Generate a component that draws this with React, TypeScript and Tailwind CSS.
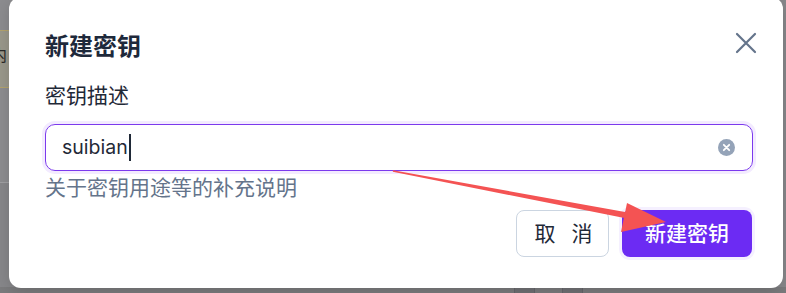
import React from "react";

const cjk = { fontFamily: "Inter, 'Noto Sans CJK SC', sans-serif" };

function CloseIcon() {
  return (
    <svg width="22" height="22" viewBox="0 0 22 22" fill="none">
      <path d="M2 2 L20 20 M20 2 L2 20" stroke="#64748b" strokeWidth="2.2" strokeLinecap="round" />
    </svg>
  );
}

function ClearIcon() {
  return (
    <svg width="17" height="17" viewBox="0 0 17 17">
      <circle cx="8.5" cy="8.5" r="8.5" fill="#94a3b8" />
      <path d="M5.8 5.8 L11.2 11.2 M11.2 5.8 L5.8 11.2" stroke="#fff" strokeWidth="1.8" strokeLinecap="round" />
    </svg>
  );
}

// red annotation arrow drawn over the screenshot
function Arrow() {
  return (
    <svg className="absolute left-0 top-0 pointer-events-none" width="786" height="293" viewBox="0 0 786 293">
      <polygon points="393,170.2 392.8,171.8 629.4,219 630.6,213" fill="#f45353" />
      <polygon points="627,203 666,222 621,232" fill="#f45353" />
    </svg>
  );
}

export default function App() {
  return (
    <div className="relative w-[786px] h-[293px] overflow-hidden bg-[#88888b]" style={cjk}>
      {/* backdrop remnants */}
      <div className="absolute left-0 top-0 w-[12px] h-full flex flex-col">
        <div className="h-[30px] bg-[#8c8c8f]" />
        <div className="h-[58px] bg-[#9a988b] border-y border-[#b3a36d] relative">
          <span className="absolute left-[-9px] top-[16px] text-[16px] leading-none text-[#2a2a2a]">内</span>
        </div>
        <div className="h-[95px] bg-[#8d8d90] border-b border-[#a0a0a3]" />
        <div className="flex-1 bg-[#87878a]" />
      </div>
      <div className="absolute left-0 bottom-0 w-full h-[6px] bg-[#7b7b7d] flex">
        <div className="ml-[514px] w-[21px] h-full bg-[#707074] border-x border-[#65656a]" />
        <div className="ml-[27px] w-[21px] h-full bg-[#707074] border-x border-[#65656a]" />
      </div>

      {/* dialog */}
      <div className="relative ml-[9px] mt-[-3px] w-[774px] h-[291px] rounded-[12px] bg-white pl-[36px] pr-[30px] pt-[34px] shadow-[0_4px_16px_rgba(0,0,0,0.15)]">
        <h2 className="text-[24px] leading-[32px] font-bold text-[#1e293b]">新建密钥</h2>
        <button className="absolute right-[26px] top-[35px]">
          <CloseIcon />
        </button>

        <div className="mt-[18px] text-[21px] leading-[30px] text-[#1f2937]">密钥描述</div>

        <div className="mt-[13px] h-[47px] rounded-[10px] border-[1.5px] border-[#7c3aed] shadow-[0_0_0_3px_#f3ebff] flex items-center pl-[16px] pr-[17px]">
          <span className="text-[19.5px] text-[#1f2937]">suibian</span>
          <span className="w-[2px] h-[27px] bg-[#1f2937] ml-[1px]" />
          <span className="flex-1" />
          <ClearIcon />
        </div>

        <div className="mt-[2px] text-[21px] leading-[30px] text-[#64748b]">关于密钥用途等的补充说明</div>

        <div className="mt-[7px] flex justify-end gap-[13px] pr-[1px]">
          <button className="w-[93px] h-[47px] rounded-[8px] border border-[#cbd5e1] bg-white text-[21px] text-[#1f2937] flex items-center justify-center gap-[16px] pl-[2px]">
            <span>取</span>
            <span>消</span>
          </button>
          <button className="w-[130px] h-[47px] rounded-[8px] bg-[#6c2bf3] text-[21px] font-medium text-white shadow-[0_0_0_3px_#f5f0ff]">
            新建密钥
          </button>
        </div>
      </div>

      <Arrow />
    </div>
  );
}
